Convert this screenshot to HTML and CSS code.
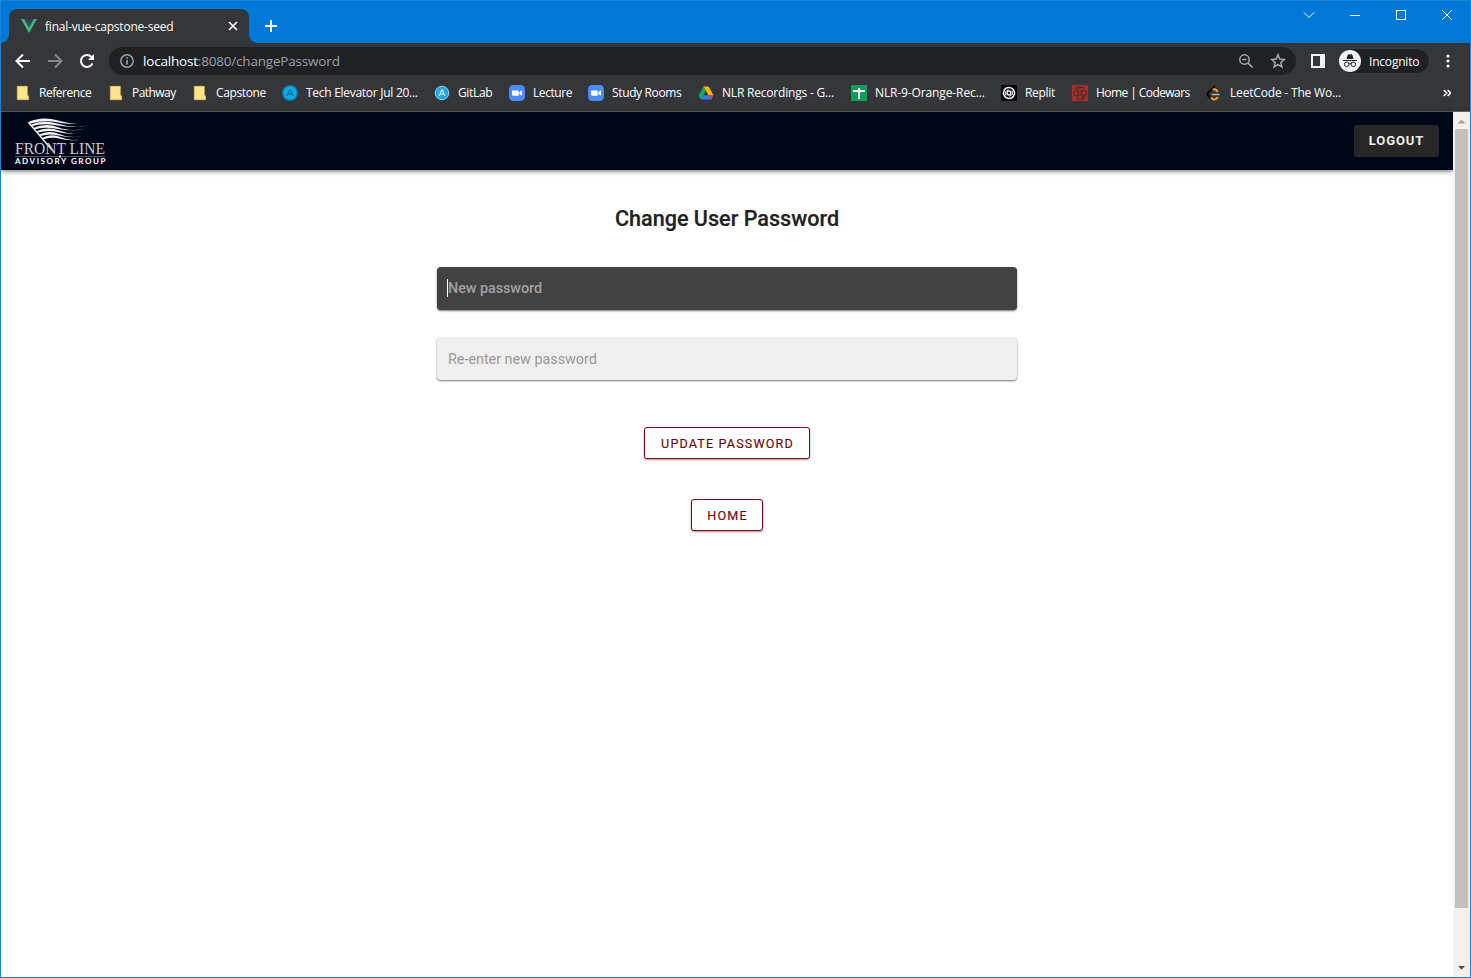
FILE: index.html
```html
<!DOCTYPE html>
<html lang="en">
<head>
<meta charset="utf-8">
<title>final-vue-capstone-seed</title>
<link rel="stylesheet" href="styles.css">
</head>
<body>
<div class="window">
  <div class="titlebar">
    <div class="tab">
      <svg class="vue" viewBox="0 0 16 16"><path fill="#41b883" d="M0 1h3.200L8 9.300 12.800 1H16L8 15z"/><path fill="#35495e" d="M3.200 1h2.900L8 4.300 9.900 1h2.900L8 9.300z"/></svg>
      <span class="tab-title">final-vue-capstone-seed</span>
      <svg class="tab-close" viewBox="0 0 10 10"><path d="M1 1l8 8M9 1l-8 8" stroke="#fff" stroke-width="1.600"/></svg>
    </div>
    <svg class="newtab" viewBox="0 0 12 12"><path d="M6 0v12M0 6h12" stroke="#fff" stroke-width="2"/></svg>
    <div class="controls">
      <svg viewBox="0 0 12 12"><path d="M1 3.500l5 5 5-5"/></svg>
      <svg viewBox="0 0 12 12"><path d="M1 6.500h10"/></svg>
      <svg viewBox="0 0 12 12"><path d="M1.500 1.500h9v9h-9z"/></svg>
      <svg viewBox="0 0 12 12"><path d="M1 1l10 10M11 1L1 11"/></svg>
    </div>
  </div>
  <div class="toolbar">
    <svg class="nav" viewBox="0 0 16 16"><path d="M15 8H2M8 1.500L1.500 8 8 14.500" stroke="#fff"/></svg>
    <svg class="nav" viewBox="0 0 16 16"><path d="M1 8h13M8 1.500L14.500 8 8 14.500" stroke="#87888b"/></svg>
    <svg class="nav" viewBox="0 0 16 16"><path d="M13.500 10.300A6 6 0 1 1 12.300 3.800L14 5.500" stroke="#fff"/><path d="M15 1v6H9z" fill="#fff" stroke="none"/></svg>
    <div class="omnibox">
      <svg class="info" viewBox="0 0 14 14"><circle cx="7" cy="7" r="6.200" fill="none" stroke="#9aa0a6" stroke-width="1.500"/><path d="M7 6v4.500M7 3.300v1.500" stroke="#9aa0a6" stroke-width="1.600"/></svg>
      <span class="url"><b>localhost</b>:8080/changePassword</span>
      <svg class="omni-icon" viewBox="0 0 16 16"><circle cx="6.500" cy="6.500" r="4.700"/><path d="M4.500 6.500h4M10 10l4.500 4.500"/></svg>
      <svg class="omni-icon" viewBox="0 0 16 16"><path d="M8 1.800l1.700 4.300 4.600.4-3.500 3 1.100 4.500L8 11.600 4.100 14l1.100-4.500-3.500-3 4.600-.4z"/></svg>
    </div>
    <svg class="panel" viewBox="0 0 14 14"><path fill="#f1f3f4" fill-rule="evenodd" d="M0 0h14v14H0zM2 2v10h7V2z"/></svg>
    <div class="incognito">
      <svg viewBox="0 0 22 22"><circle cx="11" cy="11" r="11" fill="#f1f3f4"/><path fill="#202124" d="M7.500 9l1.200-4.300q.4-.7 1.300-.4l1 .4 1-.4q.9-.3 1.300.4L14.500 9z"/><path d="M4 10.500h14" stroke="#202124"/><g fill="none" stroke="#202124"><circle cx="7.700" cy="14.300" r="2.300"/><circle cx="14.300" cy="14.300" r="2.300"/><path d="M10 14q1-.8 2 0"/></g></svg>
      <span>Incognito</span>
    </div>
    <svg class="dots" viewBox="0 0 4 14"><g fill="#f1f3f4"><circle cx="2" cy="2" r="1.600"/><circle cx="2" cy="7" r="1.600"/><circle cx="2" cy="12" r="1.600"/></g></svg>
  </div>
  <div class="bookmarks">
    <div class="mark"><svg viewBox="0 0 16 16"><path fill="#ffe590" stroke="#efc64e" stroke-width=".7" d="M2.300 1.300h10v9.400h1.300v4H2.300z"/></svg><span class="w-reference">Reference</span></div>
    <div class="mark"><svg viewBox="0 0 16 16"><path fill="#ffe590" stroke="#efc64e" stroke-width=".7" d="M2.300 1.300h10v9.400h1.300v4H2.300z"/></svg><span class="w-pathway">Pathway</span></div>
    <div class="mark"><svg viewBox="0 0 16 16"><path fill="#ffe590" stroke="#efc64e" stroke-width=".7" d="M2.300 1.300h10v9.400h1.300v4H2.300z"/></svg><span class="w-capstone">Capstone</span></div>
    <div class="mark"><svg viewBox="0 0 16 16"><circle cx="8" cy="8" r="7.300" fill="#00aef0" stroke="#177aa5" stroke-width="1.400"/><path d="M4.700 11L8 4.300 11.300 11M6 9h4" fill="none" stroke="#07577d"/></svg><span class="w-elevator">Tech Elevator Jul 20...</span></div>
    <div class="mark"><svg viewBox="0 0 16 16"><circle cx="8" cy="8" r="6.800" fill="#26a9e0" stroke="#8bd3ef"/><path d="M5 11L8 4.500 11 11M6 9h4" fill="none" stroke="#e5f6fd"/></svg><span class="w-gitlab">GitLab</span></div>
    <div class="mark"><svg viewBox="0 0 16 16"><rect width="16" height="16" rx="4.500" fill="#4a8cff"/><path fill="#fff" d="M3 5.500h5.500q1.200 0 1.200 1.200v4H4.500Q3 10.700 3 9.500zM10.300 7.200L13 5.300v5.500L10.300 9z"/></svg><span class="w-lecture">Lecture</span></div>
    <div class="mark"><svg viewBox="0 0 16 16"><rect width="16" height="16" rx="4.500" fill="#4a8cff"/><path fill="#fff" d="M3 5.500h5.500q1.200 0 1.200 1.200v4H4.500Q3 10.700 3 9.500zM10.300 7.200L13 5.300v5.500L10.300 9z"/></svg><span class="w-study">Study Rooms</span></div>
    <div class="mark"><svg viewBox="0 0 16 16"><path fill="#0da960" d="M5.500 1.500L8 6 3 14.500.5 10.300z"/><path fill="#ffba00" d="M5.500 1.500h5l5 8.800h-5z"/><path fill="#2f7df6" d="M5.500 10.300h7.500L15.500 10.300 13 14.500H3z"/><path fill="#e94235" d="M11 10.300h4.500L13 14.500z"/></svg><span class="w-drive">NLR Recordings - G...</span></div>
    <div class="mark"><svg viewBox="0 0 16 16"><path fill="#0f9d58" d="M0 0h16v16H0z"/><path d="M8 3v11M2 6h12" stroke="#fff" stroke-width="2"/></svg><span class="w-sheets">NLR-9-Orange-Rec...</span></div>
    <div class="mark"><svg viewBox="0 0 16 16"><rect width="16" height="16" rx="1" fill="#080808"/><g fill="none" stroke="#eee" stroke-width="1.500"><circle cx="8" cy="8" r="1.900"/><path d="M3.500 11A5.300 5.300 0 0 1 8 2.600Q12.500 3 13.300 7M12.500 5A5.300 5.300 0 0 1 8 13.400Q3.500 13 2.700 9"/><path d="M5 10.500Q3 6 7.500 4.700M11 5.500Q13 10 8.500 11.300" stroke-width="1"/></g></svg><span class="w-replit">Replit</span></div>
    <div class="mark"><svg viewBox="0 0 16 16"><path fill="#a62d29" d="M0 0h16v16H0z"/><g fill="none" stroke="#532827" stroke-width="1.100"><circle cx="8" cy="8" r="2"/><path d="M6 7Q4 3 8 2.500T12 4M9 6q4-2 5 1t-2 4M10 9q2 4-1 5t-4-2M7 10q-4 2-5-1t2-4M3 4q2-3 5-2.500M13 11q-1 3-4 3"/></g></svg><span class="w-codewars">Home | Codewars</span></div>
    <div class="mark"><svg viewBox="0 0 16 16"><g fill="none" stroke-width="2" stroke-linecap="round"><path d="M8.500 1.500L2 8q-1 1.300 0 2.500L4.500 13" stroke="#050505"/><path d="M7.500 4.500q1.500-.7 2.800.7L11.300 6.200M5.500 13q2 2.500 4.500 1l1.300-1.300" stroke="#ffa116"/><path d="M6.500 9.500h6.500" stroke="#b3b3b3" stroke-width="1.600"/></g></svg><span class="w-leetcode">LeetCode - The Wo...</span></div>
    <svg class="more" viewBox="0 0 8 8"><path d="M.8 1l3 3-3 3M4.600 1l3 3-3 3" fill="none" stroke="#fff" stroke-width="1.500"/></svg>
  </div>
  <div class="viewport">
    <div class="page">
      <header class="header">
        <svg class="logo" viewBox="0 0 94 50">
          <g fill="#f4f4f6">
            <path d="M13 4.200Q27-2 43 2.500T70 5.500Q53 7 42 4.300T14.500 5.700z"/>
            <path d="M15 7Q29 1 43 5.800T75 7.300Q60 10.500 43 7.600T16.500 8.500z"/>
            <path d="M18 10Q31 4.500 43 9.200T73 10.800Q58 13.700 43 11T19.500 11.500z"/>
            <path d="M21 13.300Q33 8 44 12.600T70 14.300Q55 17 44 14.300T22.500 14.800z"/>
            <path d="M24 16.600Q34 11.500 44 16T67 18Q54 20 44 17.600T25.500 18z"/>
            <path d="M27 20Q36 15 46 19.300T64 21.700Q52 23 45 20.800T28.500 21.300z"/>
          </g>
          <path d="M13.500 4.500L37 32" stroke="#f4f4f6" stroke-width="1.300"/>
          <text class="logo-name" x="0" y="35.500" textLength="90" lengthAdjust="spacingAndGlyphs">FRONT LINE</text>
          <path d="M0 38.500h90" stroke="#8b8e98" stroke-width=".6"/><path d="M44 37.500h2v2h-2z" fill="#fff"/>
          <text class="logo-sub" x="0" y="46.300" textLength="92" lengthAdjust="spacingAndGlyphs">ADVISORY GROUP</text>
        </svg>
        <button class="logout">LOGOUT</button>
      </header>
      <main class="form">
        <h1>Change User Password</h1>
        <div class="field field-focused"><i class="caret"></i><span>New password</span></div>
        <div class="field">Re-enter new password</div>
        <button class="outline update">UPDATE PASSWORD</button>
        <button class="outline home">HOME</button>
      </main>
    </div>
    <div class="scrollbar">
      <svg viewBox="0 0 17 17"><path d="M4.500 11.500L8.500 7.500l4 4z" fill="#a3a3a3"/></svg>
      <div class="thumb"></div>
      <svg viewBox="0 0 17 17"><path d="M5 6h7L8.500 9.800z" fill="#505050"/></svg>
    </div>
  </div>
</div>
</body>
</html>
```

FILE: styles.css
```css
* { box-sizing: border-box; }
body { margin: 0; font-family: "Open Sans", "Noto Sans", sans-serif; }
svg { display: block; flex: none; }
.window { width: 1471px; height: 978px; border: 1px solid #1883d7; background: #fff; display: flex; flex-direction: column; overflow: hidden; }
.titlebar { height: 42px; flex: none; background: #0078d7; display: flex; }
.tab { position: relative; width: 240px; height: 34px; margin: 8px 0 0 8px; padding: 0 11px 0 12px; border-radius: 8px 8px 0 0; background: #35363a; display: flex; align-items: center; }
.tab::before, .tab::after { content: ""; position: absolute; bottom: 0; width: 8px; height: 8px; }
.tab::before { left: -8px; background: radial-gradient(circle at 0 0, transparent 7.5px, #35363a 8px); }
.tab::after { right: -8px; background: radial-gradient(circle at 100% 0, transparent 7.5px, #35363a 8px); }
.vue { width: 16px; height: 16px; }
.tab-title { margin-left: 8px; flex: 1; color: #fff; font-size: 12px; letter-spacing: -.22px; white-space: nowrap; }
.tab-close { width: 10px; height: 10px; }
.newtab { width: 12px; height: 12px; margin: 19px 0 0 16px; }
.controls { margin-left: auto; padding: 8px 17px 0 0; display: flex; gap: 34px; }
.controls svg { width: 12px; height: 12px; fill: none; stroke: #fff; stroke-width: 1; }
.toolbar { height: 36px; flex: none; background: #35363a; display: flex; align-items: center; padding-left: 14px; }
.nav { width: 16px; height: 16px; margin-right: 16px; fill: none; stroke-width: 2; }
.omnibox { width: 1187px; height: 28px; margin-left: -2px; padding: 0 10px 0 11px; border-radius: 14px; background: #202124; display: flex; align-items: center; }
.info { width: 14px; height: 14px; }
.url { flex: 1; margin-left: 9px; color: #9aa0a6; font-size: 13.5px; letter-spacing: -.19px; }
.url b { color: #fff; font-weight: 400; }
.omni-icon { width: 16px; height: 16px; margin-left: 16px; fill: none; stroke: #a7abb0; stroke-width: 1.5; }
.panel { width: 14px; height: 14px; margin-left: 15px; }
.incognito { width: 92px; height: 26px; margin-left: 13px; border: 1px solid #3d3e41; border-radius: 13px; background: #202124; display: flex; align-items: center; gap: 8px; color: #fff; font-size: 12px; letter-spacing: -.2px; }
.incognito svg { width: 22px; height: 22px; }
.dots { width: 4px; height: 14px; margin-left: 16px; }
.bookmarks { height: 33px; flex: none; background: #35363a; border-bottom: 1px solid #5f6368; display: flex; gap: 16px; padding: 6px 19px 0 14px; }
.mark { height: 16px; display: flex; align-items: center; gap: 8px; color: #fff; font-size: 12px; line-height: 16px; white-space: nowrap; }
.mark svg { width: 16px; height: 16px; }
.w-reference { width: 53px; letter-spacing: -.46px; }
.w-pathway { width: 44px; letter-spacing: -.55px; }
.w-capstone { width: 50px; letter-spacing: -.38px; }
.w-elevator { width: 112px; letter-spacing: -.28px; }
.w-gitlab { width: 35px; letter-spacing: -.35px; }
.w-lecture { width: 39px; letter-spacing: -.42px; }
.w-study { width: 70px; letter-spacing: -.36px; }
.w-drive { width: 113px; letter-spacing: -.2px; }
.w-sheets { width: 110px; letter-spacing: -.12px; }
.w-replit { width: 31px; letter-spacing: -.3px; }
.w-codewars { width: 94px; letter-spacing: -.57px; }
.w-leetcode { width: 111px; letter-spacing: -.18px; }
.more { width: 8px; height: 8px; margin: 4px 0 0 auto; }
.viewport { flex: 1; display: flex; min-height: 0; }
.page { flex: 1; font-family: Roboto, sans-serif; }
.header { height: 58px; padding: 0 14px; background: #000718; box-shadow: 0 1px 5px rgba(0, 0, 0, .6); display: flex; align-items: center; justify-content: space-between; }
.logo { width: 94px; height: 50px; margin-top: 3px; overflow: visible; }
.logo-name { font: 17px "Liberation Serif", serif; fill: #c9ccd3; }
.logo-sub { font: 700 7.2px Lato, sans-serif; letter-spacing: 1.4px; fill: #fff; }
button { font-family: Roboto, sans-serif; padding: 0; }
.logout { width: 85px; height: 32px; padding-bottom: 2px; border: 0; border-radius: 3px; background: #272727; color: #eee; font-size: 13px; font-weight: 700; letter-spacing: .9px; }
.form { display: flex; flex-direction: column; align-items: center; }
h1 { margin: 35px 0 0; font-size: 21.6px; line-height: 28px; font-weight: 500; color: #212121; -webkit-text-stroke: .2px #212121; }
.field { width: 580px; height: 43px; margin-top: 27px; padding-left: 11px; border-radius: 4px; background: #efefef; box-shadow: 0 1px 2px rgba(0, 0, 0, .55); color: #999; font-size: 14.4px; line-height: 45px; letter-spacing: -.03px; }
.field-focused { position: relative; margin-top: 34px; background: #424242; color: #a0a0a0; font-weight: 500; line-height: 43px; letter-spacing: -.06px; }
.caret { position: absolute; left: 10px; top: 12px; width: 1px; height: 18px; background: #fff; }
.outline { height: 32px; padding-left: 1px; border: 1px solid #8b0010; border-radius: 3px; background: #fff; box-shadow: 0 1px 2px rgba(0, 0, 0, .4); color: #6b0710; font-size: 12.6px; font-weight: 400; letter-spacing: 1.15px; -webkit-text-stroke: .15px #6b0710; }
.update { width: 166px; margin-top: 47px; }
.home { width: 72px; margin-top: 40px; }
.scrollbar { width: 17px; background: #f1f1f1; display: flex; flex-direction: column; }
.scrollbar svg { width: 17px; height: 17px; }
.thumb { width: 13px; height: 779px; margin: 0 2px auto; background: #c1c1c1; }
```
